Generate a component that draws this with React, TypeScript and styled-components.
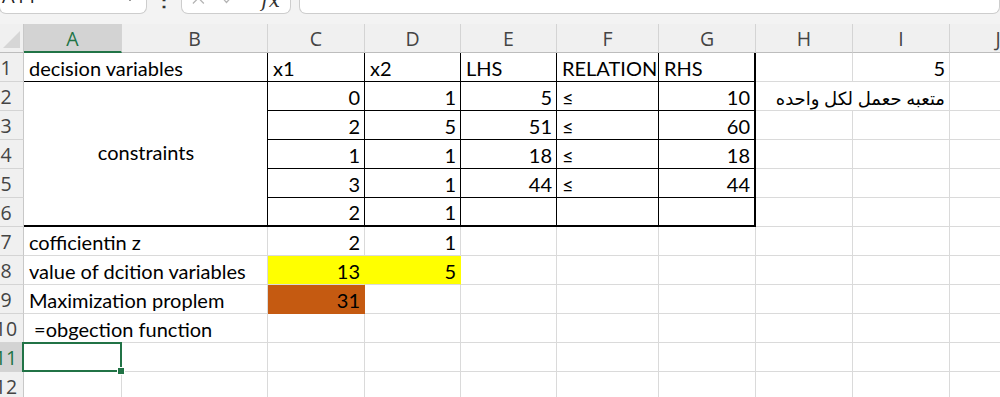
import React from 'react';
import styled, { createGlobalStyle } from 'styled-components';

const GlobalStyle = createGlobalStyle`
  html, body { margin: 0; padding: 0; background: #ffffff; overflow: hidden; }
`;

const GREEN = '#217346';
const GRID = '#dadada';

const Page = styled.div`
  width: 1000px;
  height: 397px;
  overflow: hidden;
  display: flex;
  flex-direction: column;
  background: #fff;
`;

const Toolbar = styled.div`
  flex: none;
  height: 24px;
  box-sizing: border-box;
  padding-bottom: 10px;
  display: flex;
  align-items: flex-end;
  background: #f3f3f3;
  overflow: hidden;
  font-family: "Open Sans", "Noto Sans", sans-serif;
`;

const Box = styled.div<{ $w?: number; $grow?: boolean }>`
  flex: ${p => (p.$grow ? '1 1 auto' : 'none')};
  width: ${p => (p.$w ? `${p.$w}px` : 'auto')};
  height: 34px;
  box-sizing: border-box;
  background: #fff;
  border: 1px solid #cdcdcd;
  border-top: none;
  border-radius: 0 0 7px 7px;
  display: flex;
  align-items: flex-end;
  padding: 0 10px 8px 10px;
  gap: 16px;
`;

const NameText = styled.span`
  flex: 1;
  font-size: 20px;
  line-height: 1;
  color: #222;
  margin-left: -8px;
  margin-bottom: -1px;
`;

const Dots = styled.div`
  flex: none;
  width: 34px;
  display: flex;
  justify-content: center;
  align-items: flex-end;
  padding-bottom: 5px;
  font-size: 20px;
  line-height: 1;
  color: #333;
  font-weight: 700;
`;

const Fx = styled.span`
  font-family: "DejaVu Serif", serif;
  font-style: italic;
  font-size: 20px;
  line-height: 1;
  color: #333;
  margin-left: 10px;
  margin-bottom: -5px;
`;

const Chevron = styled.span`
  display: flex;
  margin-bottom: 3px;
`;

const Spacer = styled.div`
  flex: none;
  width: 8px;
`;

const Sheet = styled.div`
  flex: none;
  display: grid;
  grid-template-columns: 24px 98px 146px 97px 96px 96px 102px 97px 97px 97px 97px;
  grid-auto-rows: 29px;
  font-family: Lato, "DejaVu Sans", sans-serif;
  font-size: 20px;
  color: #000;
`;

const Corner = styled.div`
  position: relative;
  box-sizing: border-box;
  background: #f0f0f0;
  border-right: 1px solid #c8c8c8;
  border-bottom: 1px solid #bdbdbd;
  display: flex;
  align-items: flex-end;
  justify-content: flex-end;
  padding: 0 3px 4px 0;
`;

const CornerTri = styled.div`
  width: 17px;
  height: 17px;
  background: #d6d6d6;
  clip-path: polygon(100% 0, 100% 100%, 0 100%);
`;

const ColHead = styled.div<{ $sel?: boolean }>`
  box-sizing: border-box;
  display: flex;
  align-items: center;
  justify-content: center;
  background: ${p => (p.$sel ? '#d3d3d3' : '#f0f0f0')};
  border-right: 1px solid #d4d4d4;
  border-bottom: ${p => (p.$sel ? `2px solid ${GREEN}` : '1px solid #bdbdbd')};
  font-family: "Open Sans", "Noto Sans", sans-serif;
  font-size: 19.5px;
  color: ${p => (p.$sel ? GREEN : '#444')};
  padding-top: ${p => (p.$sel ? '1px' : '0')};
`;

const RowHead = styled.div<{ $sel?: boolean }>`
  box-sizing: border-box;
  overflow: hidden;
  display: flex;
  align-items: center;
  background: ${p => (p.$sel ? '#d3d3d3' : '#f0f0f0')};
  border-right: 1px solid #c8c8c8;
  border-bottom: 1px solid #d4d4d4;
  font-family: "Open Sans", "Noto Sans", sans-serif;
  font-size: 19.5px;
  color: ${p => (p.$sel ? GREEN : '#444')};
`;

const RowNum = styled.span`
  flex: none;
  width: 36px;
  margin-left: -12px;
  text-align: center;
  line-height: 1;
  padding-top: 2px;
`;

const Arabic = styled.span`
  font-size: 18px;
`;

type Edge = 'grid' | 'thin' | 'thick' | 'none' | 'fill';

const edge = (e: Edge | undefined, bg: string) => {
  switch (e) {
    case 'thin':
      return '1px solid #000';
    case 'thick':
      return '2px solid #000';
    case 'none':
      return '0';
    case 'fill':
      return `1px solid ${bg}`;
    default:
      return `1px solid ${GRID}`;
  }
};

const Cell = styled.div<{
  $align?: 'left' | 'right' | 'center';
  $bg?: string;
  $r?: Edge;
  $b?: Edge;
  $span?: number;
  $rows?: number;
  $mid?: boolean;
  $rtl?: boolean;
}>`
  box-sizing: border-box;
  position: relative;
  display: flex;
  align-items: ${p => (p.$mid ? 'center' : 'flex-end')};
  justify-content: ${p =>
    p.$align === 'right' ? 'flex-end' : p.$align === 'center' ? 'center' : 'flex-start'};
  padding: 0 4px 3px 5px;
  grid-column: span ${p => p.$span ?? 1};
  grid-row: span ${p => p.$rows ?? 1};
  background: ${p => p.$bg ?? '#fff'};
  border-right: ${p => edge(p.$r, p.$bg ?? '#fff')};
  border-bottom: ${p => edge(p.$b, p.$bg ?? '#fff')};
  white-space: pre;
  line-height: 1;
  direction: ${p => (p.$rtl ? 'rtl' : 'ltr')};
`;

const Selected = styled(Cell)`
  &::after {
    content: '';
    position: absolute;
    left: -2px;
    top: -1px;
    right: -1px;
    bottom: -1px;
    border: 2px solid ${GREEN};
    pointer-events: none;
  }
  &::before {
    content: '';
    position: absolute;
    right: -4px;
    bottom: -4px;
    width: 6px;
    height: 6px;
    background: ${GREEN};
    border: 1px solid #fff;
    z-index: 2;
  }
`;

const COLS = ['A', 'B', 'C', 'D', 'E', 'F', 'G', 'H', 'I', 'J'];

type Spec = {
  v?: React.ReactNode;
  align?: 'left' | 'right' | 'center';
  bg?: string;
  r?: Edge;
  b?: Edge;
  span?: number;
  rows?: number;
  mid?: boolean;
  rtl?: boolean;
};

const tbl = (v: string, isLastRow: boolean, isG: boolean, align: 'left' | 'right' = 'right'): Spec => ({
  v,
  align,
  r: isG ? 'thick' : 'thin',
  b: isLastRow ? 'thick' : 'thin',
});

const empty = (n: number): Spec[] => Array.from({ length: n }, () => ({}));

const tableRow = (vals: string[], last: boolean): Spec[] =>
  vals.map((v, i) => tbl(v, last, i === 4, i === 3 ? 'left' : 'right'));

const rows: Spec[][] = [
  [
    { v: 'decision variables', span: 2, r: 'thin', b: 'thin' },
    { v: 'x1', r: 'thin', b: 'thin' },
    { v: 'x2', r: 'thin', b: 'thin' },
    { v: 'LHS', r: 'thin', b: 'thin' },
    { v: 'RELATION', r: 'thin', b: 'thin' },
    { v: 'RHS', r: 'thick', b: 'thin' },
    {},
    { v: '5', align: 'right' },
    {},
  ],
  [
    { v: 'constraints', span: 2, rows: 5, r: 'thin', b: 'thick', align: 'center', mid: true },
    ...tableRow(['0', '1', '5', '≤', '10'], false),
    { v: <Arabic>متعبه حعمل لكل واحده</Arabic>, span: 2, rtl: true, align: 'left' },
    {},
  ],
  [...tableRow(['2', '5', '51', '≤', '60'], false), ...empty(3)],
  [...tableRow(['1', '1', '18', '≤', '18'], false), ...empty(3)],
  [...tableRow(['3', '1', '44', '≤', '44'], false), ...empty(3)],
  [...tableRow(['2', '1', '', '', ''], true), ...empty(3)],
  [
    { v: 'cofficientin z', span: 2 },
    { v: '2', align: 'right' },
    { v: '1', align: 'right' },
    ...empty(6),
  ],
  [
    { v: 'value of dcition variables', span: 2 },
    { v: '13', align: 'right', bg: '#ffff00', r: 'fill' },
    { v: '5', align: 'right', bg: '#ffff00', r: 'fill' },
    ...empty(6),
  ],
  [
    { v: 'Maximization proplem', span: 2 },
    { v: '31', align: 'right', bg: '#c55a11', r: 'fill', b: 'fill' },
    ...empty(7),
  ],
  [{ v: ' =obgection function', span: 2 }, ...empty(8)],
  [{}, ...empty(9)],
  [...empty(10)],
];

function IconX() {
  return (
    <svg width="14" height="14" viewBox="0 0 14 14" fill="none" stroke="#b4b4b4" strokeWidth="1.4">
      <path d="M1 1 L13 13 M13 1 L1 13" />
    </svg>
  );
}

function IconCheck() {
  return (
    <svg width="16" height="14" viewBox="0 0 16 14" fill="none" stroke="#b4b4b4" strokeWidth="1.4">
      <path d="M1 6 L6 12 L15 2" />
    </svg>
  );
}

function IconChevron() {
  return (
    <svg width="12" height="8" viewBox="0 0 12 8" fill="none" stroke="#444" strokeWidth="1.5">
      <path d="M1 1 L6 6 L11 1" />
    </svg>
  );
}

export default function App() {
  return (
    <Page>
      <GlobalStyle />
      <Toolbar>
        <Box $w={148} style={{ marginLeft: -1 }}>
          <NameText>A11</NameText>
          <Chevron>
            <IconChevron />
          </Chevron>
        </Box>
        <Dots>⋮</Dots>
        <Box $w={110}>
          <IconX />
          <IconCheck />
          <Fx>fx</Fx>
        </Box>
        <Spacer />
        <Box $grow />
      </Toolbar>
      <Sheet>
        <Corner>
          <CornerTri />
        </Corner>
        {COLS.map(c => (
          <ColHead key={c} $sel={c === 'A'}>
            {c}
          </ColHead>
        ))}
        {rows.map((cells, ri) => (
          <React.Fragment key={ri}>
            <RowHead $sel={ri === 10}>
              <RowNum>{ri + 1}</RowNum>
            </RowHead>
            {cells.map((c, ci) => {
              const C = ri === 10 && ci === 0 ? Selected : Cell;
              return (
                <C
                  key={ci}
                  $align={c.align}
                  $bg={c.bg}
                  $r={c.r}
                  $b={c.b}
                  $span={c.span}
                  $rows={c.rows}
                  $mid={c.mid}
                  $rtl={c.rtl}
                >
                  {c.v}
                </C>
              );
            })}
          </React.Fragment>
        ))}
      </Sheet>
    </Page>
  );
}
